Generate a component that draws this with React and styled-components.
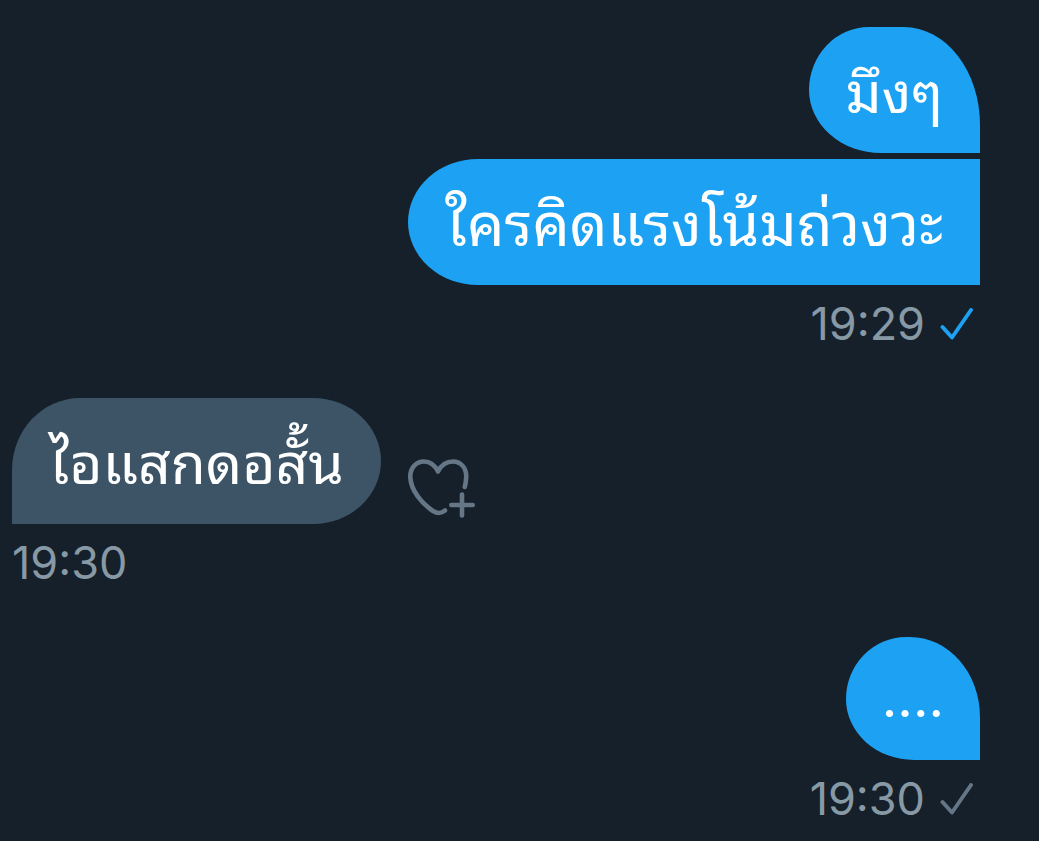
import React from "react";
import styled, { createGlobalStyle } from "styled-components";

const GlobalStyle = createGlobalStyle`
  * {
    box-sizing: border-box;
  }
  body {
    margin: 0;
    background: #16202a;
    font-family: Inter, "Noto Sans Thai Looped", Loma, Waree, Garuda, "Liberation Sans", sans-serif;
  }
`;

const Conversation = styled.main`
  display: flex;
  flex-direction: column;
  gap: 46px;
  min-height: 100vh;
  padding: 27px 59px 12px 12px;
`;

const Group = styled.section`
  display: flex;
  flex-direction: column;
  align-items: ${({ $sent }) => ($sent ? "flex-end" : "flex-start")};
  gap: 6px;
`;

const Row = styled.div`
  display: flex;
  align-items: flex-end;
  gap: 26px;
`;

const shapes = {
  first: { radius: "60px 76px 0 72px / 63px 98px 0 63px", size: 57, padding: "30px 37px 24px" },
  last: { radius: "70px 0 0 70px / 63px 0 0 63px", size: 59, padding: "30px 37px 24px" },
  single: { radius: "60px 70px 0 68px / 62px 80px 0 61px", size: 54, padding: "25px 36px 26px" },
  received: { radius: "68px 68px 68px 0 / 72px 63px 63px 0", size: 57, padding: "30px 37px 24px" },
};

const Bubble = styled.p`
  margin: 0;
  padding: ${({ $shape }) => shapes[$shape].padding};
  border-radius: ${({ $shape }) => shapes[$shape].radius};
  background: ${({ $shape }) => ($shape === "received" ? "#3d5466" : "#1da1f2")};
  color: #fff;
  font-size: ${({ $shape }) => shapes[$shape].size}px;
  line-height: 72px;
  white-space: nowrap;
`;

const Meta = styled.div`
  display: flex;
  align-items: center;
  gap: 15px;
  padding: 5px ${({ $sent }) => ($sent ? "7px" : "0")} 0 0;
  color: #8899a6;
  font-size: 45px;
  line-height: 56px;
`;

const LikeButton = styled.button`
  display: flex;
  padding: 0 0 4px;
  border: 0;
  background: none;
  color: #657786;
  cursor: pointer;
`;

const Check = ({ color, label }) => (
  <svg width="33" height="33" viewBox="0 0 33 33" fill="none" role="img" aria-label={label}>
    <path d="M2.5 19L12 29.5L31 2" stroke={color} strokeWidth="3.9" strokeLinecap="round" strokeLinejoin="round" />
  </svg>
);

const HeartPlus = () => (
  <svg width="68" height="61" viewBox="0 0 68 61" fill="none" stroke="currentColor" strokeWidth="4.6" strokeLinecap="round" strokeLinejoin="round" aria-hidden="true">
    <path d="M38 51.5C34 54.8 31 55 26 52C14 44 4 31 3.3 18.5C2.8 9 9 2.5 17 2.5C24 2.5 28 6.5 31 12.5C34 6.5 39 2.5 46 2.5C54 2.5 59.5 9 59.2 18C59.1 22 58.5 25 57.8 28" />
    <path d="M55 35.5V56.5M44.3 46H65.7" />
  </svg>
);

const App = () => {
  return (
    <>
      <GlobalStyle />
      <Conversation>
        <Group $sent>
          <Bubble $shape="first">มึงๆ</Bubble>
          <Bubble $shape="last">ใครคิดแรงโน้มถ่วงวะ</Bubble>
          <Meta $sent>
            <time>19:29</time>
            <Check color="#1da1f2" label="Seen" />
          </Meta>
        </Group>
        <Group>
          <Row>
            <Bubble $shape="received">ไอแสกดอสั้น</Bubble>
            <LikeButton type="button" aria-label="Add reaction">
              <HeartPlus />
            </LikeButton>
          </Row>
          <Meta>
            <time>19:30</time>
          </Meta>
        </Group>
        <Group $sent>
          <Bubble $shape="single">....</Bubble>
          <Meta $sent>
            <time>19:30</time>
            <Check color="#657786" label="Sent" />
          </Meta>
        </Group>
      </Conversation>
    </>
  );
};

export default App;
